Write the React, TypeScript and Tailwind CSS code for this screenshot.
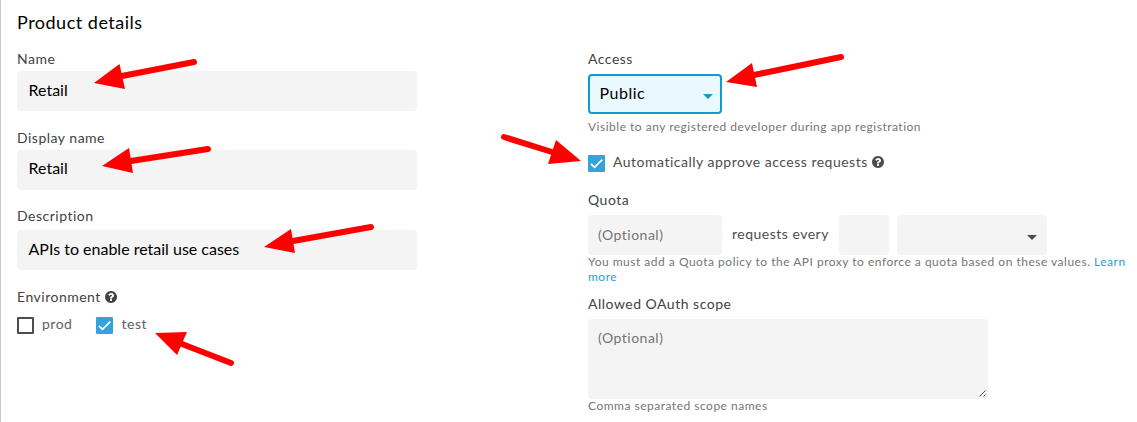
import React from "react";

function Help({ className = "" }: { className?: string }) {
  return (
    <svg viewBox="0 0 1536 1536" className={`h-3 w-3 shrink-0 fill-current ${className}`}>
      <path d="M896 1248v-192q0-14-9-23t-23-9H672q-14 0-23 9t-9 23v192q0 14 9 23t23 9h192q14 0 23-9t9-23zm256-672q0-88-55.500-163T958 297t-170-41q-243 0-371 213-15 24 8 42l132 100q7 6 19 6 16 0 25-12 53-68 86-92 34-24 86-24 48 0 85.500 26t37.500 59q0 38-20 61t-68 45q-63 28-115.500 86.500T640 892v36q0 14 9 23t23 9h192q14 0 23-9t9-23q0-19 21.500-49.500T972 829q32-18 49-28.500t46-35 44.500-48 28-60.500 12.500-81zm384 192q0 209-103 385.500T1153.500 1433 768 1536t-385.500-103T103 1153.500 0 768t103-385.500T382.500 103 768 0t385.500 103T1433 382.500 1536 768z" />
    </svg>
  );
}

function Check({ on }: { on?: boolean }) {
  if (!on) return <span className="h-[17px] w-[17px] shrink-0 rounded-[1px] border-2 border-[#4d4d4d]" />;
  return (
    <svg viewBox="0 0 17 17" className="h-[17px] w-[17px] shrink-0">
      <rect width="17" height="17" rx="1" fill="#34a2db" />
      <path d="M3 9 L6.500 12.300 L14.300 4.700" fill="none" stroke="#fff" strokeWidth="1.800" />
    </svg>
  );
}

function Caret() {
  return (
    <svg viewBox="0 0 10 5" className="h-[5px] w-[10px] fill-current">
      <path d="M0 0h10L5 5z" />
    </svg>
  );
}

function Label({ children }: { children: React.ReactNode }) {
  return <div className="flex h-5 items-center whitespace-nowrap text-sm tracking-[0.5px] text-[#424242]">{children}</div>;
}

function Value({ children, className = "pb-0.5" }: { children: React.ReactNode; className?: string }) {
  return <div className={`flex h-10 w-[400px] items-center rounded bg-[#f4f4f4] pl-[11.5px] text-base text-black ${className}`}>{children}</div>;
}

const arrows = [
  { tip: "94,83 119.500,64 125,89", x1: 122, y1: 76, x2: 194, y2: 62 },
  { tip: "102,166 129,148 133,173", x1: 131, y1: 161, x2: 208, y2: 149 },
  { tip: "264,247 291,229 295,253", x1: 293, y1: 241, x2: 371, y2: 227 },
  { tip: "155,333 187,332 177,355", x1: 182, y1: 344, x2: 231, y2: 363 },
  { tip: "726,82 752,63 757,87", x1: 754, y1: 75, x2: 841, y2: 57 },
  { tip: "581,161 556,140 548,164", x1: 552, y1: 152, x2: 504, y2: 137 },
];

export default function App() {
  return (
    <main className="relative flex h-[422px] w-[1137px] overflow-hidden border-l border-[#c8c8c8] bg-white pl-4 font-['Lato',sans-serif]">
      <section className="w-[571px] shrink-0 pt-[10px]">
        <h1 className="h-[25px] text-lg leading-6 tracking-[0.5px] text-black">Product details</h1>
        <div className="mt-[14px]">
          <Label>Name</Label>
          <div className="mt-[2px]"><Value>Retail</Value></div>
        </div>
        <div className="mt-[17px]">
          <Label>Display name</Label>
          <div className="mt-[2px]"><Value className="pb-1">Retail</Value></div>
        </div>
        <div className="mt-4">
          <Label>Description</Label>
          <div className="mt-1"><Value>APIs to enable retail use cases</Value></div>
        </div>
        <div className="mt-[17px]">
          <Label>Environment<Help className="ml-1" /></Label>
          <div className="mt-[10px] flex h-[17px] items-center text-sm tracking-[0.5px] text-[#616161]">
            <Check /><span className="ml-2 w-[54px] pb-1">prod</span>
            <Check on /><span className="ml-[8.500px] pb-1">test</span>
          </div>
        </div>
      </section>
      <section className="w-[549px] shrink-0 pt-[49px]">
        <Label>Access</Label>
        <div className="mt-[5px] flex h-10 w-[134px] items-center justify-between rounded border-2 border-[#0f9bd0] bg-[#e9f9ff] pl-[9.500px] pr-[7px] text-[#0f9bd0]">
          <span className="pb-0.5 text-base tracking-[0.5px] text-black">Public</span><span className="pt-1"><Caret /></span>
        </div>
        <p className="mt-[5px] h-4 text-xs leading-4 tracking-[0.5px] text-[#757575]">Visible to any registered developer during app registration</p>
        <div className="mt-5 flex h-[17px] items-center whitespace-nowrap text-sm tracking-[0.5px] text-[#4d4d4d]">
          <Check on /><span className="ml-2 pb-1">Automatically approve access requests</span><Help className="mb-1 ml-1" />
        </div>
        <div className="mt-[18px]"><Label>Quota</Label></div>
        <div className="mt-[5px] flex h-10 items-center text-sm tracking-[0.5px] text-[#4d4d4d]">
          <div className="flex h-10 w-[134px] items-center rounded bg-[#f4f4f4] pl-[10px] text-[#757575]">(Optional)</div>
          <span className="w-[117px] pb-0.5 pl-[10px]">requests every</span>
          <div className="h-10 w-[50px] rounded bg-[#f4f4f4]" />
          <div className="ml-2 flex h-10 w-[150px] items-center justify-end rounded bg-[#f4f4f4] pr-[10px] pt-1"><Caret /></div>
        </div>
        <p className="-mt-px h-[31px] text-xs leading-[15px] tracking-[0.5px] text-[#757575]">
          You must add a Quota policy to the API proxy to enforce a quota based on these values. <span className="text-[#1e9fd6]">Learn<br />more</span>
        </p>
        <div className="mt-[9px]"><Label>Allowed OAuth scope</Label></div>
        <div className="mt-[5px] flex h-20 w-[400px] justify-between rounded bg-[#f4f4f4] pl-[10px] pr-[2px] text-sm tracking-[0.5px] text-[#757575]">
          <span className="pt-[9px]">(Optional)</span>
          <svg viewBox="0 0 7 7" className="mb-[2px] h-[7px] w-[7px] self-end stroke-[#555]">
            <path d="M0.500 6.500l6-6M4.500 6.500l2-2" />
          </svg>
        </div>
        <p className="-mt-px text-xs leading-[15px] tracking-[0.5px] text-[#757575]">Comma separated scope names</p>
      </section>
      <svg viewBox="0 0 1137 422" className="pointer-events-none absolute -left-px top-0 h-[422px] w-[1137px]" fill="#f00" stroke="#f00">
        {arrows.map((a) => (
          <g key={a.tip}>
            <polygon points={a.tip} stroke="none" />
            <line x1={a.x1} y1={a.y1} x2={a.x2} y2={a.y2} strokeWidth="6" strokeLinecap="round" />
          </g>
        ))}
      </svg>
    </main>
  );
}
